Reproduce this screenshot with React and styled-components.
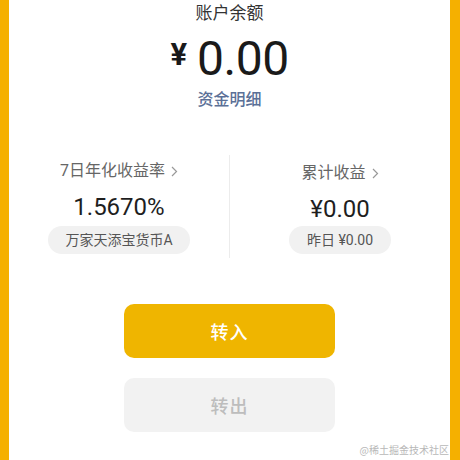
import React from "react";
import styled, { createGlobalStyle } from "styled-components";

const GlobalStyle = createGlobalStyle`
  html, body {
    margin: 0;
    padding: 0;
    background: #f5b000;
  }
  body {
    font-family: Roboto, "Noto Sans CJK SC", sans-serif;
  }
`;

const Frame = styled.div`
  width: 460px;
  height: 460px;
  box-sizing: border-box;
  padding: 0 10px 0 9px;
  background: #f5b000;
  overflow: hidden;
`;

const Panel = styled.div`
  position: relative;
  height: 100%;
  background: #fff;
  display: flex;
  flex-direction: column;
  align-items: center;
  overflow: hidden;
`;

const Title = styled.div`
  margin-top: 1px;
  font-size: 17px;
  line-height: 24px;
  color: #333;
`;

const Amount = styled.div`
  display: flex;
  align-items: center;
  height: 56px;
  margin-top: 5px;
  color: #1a1a1a;
`;

const Yen = styled.span`
  font-size: 31px;
  font-weight: 700;
  margin-right: 10px;
  margin-top: -7px;
`;

const Big = styled.span`
  font-size: 48px;
  font-weight: 400;
  letter-spacing: -0.5px;
`;

const DetailLink = styled.div`
  margin-top: 3px;
  font-size: 16px;
  line-height: 22px;
  font-weight: 500;
  color: #5b7097;
`;

const Stats = styled.div`
  align-self: stretch;
  display: grid;
  grid-template-columns: 1fr 1px 1fr;
  margin-top: 44px;
  height: 103px;
`;

const Divider = styled.div`
  background: #ececec;
`;

const Stat = styled.div`
  display: flex;
  flex-direction: column;
  align-items: center;
  padding-top: ${(p) => p.offset || 4}px;
`;

const Label = styled.div`
  display: flex;
  align-items: center;
  gap: 6px;
  font-size: 16px;
  line-height: 22px;
  color: #666;
`;

const Value = styled.div`
  margin-top: 11px;
  font-size: 24px;
  line-height: 28px;
  color: #1e1e1e;
`;

const Pill = styled.div`
  margin-top: ${(p) => p.gap || 5}px;
  height: 28px;
  padding: 0 ${(p) => p.pad || 18}px;
  border-radius: 14px;
  background: #f1f1f1;
  font-size: 14px;
  line-height: 28px;
  color: #555;
`;

const Button = styled.div`
  width: 211px;
  height: 54px;
  border-radius: 10px;
  display: flex;
  align-items: center;
  justify-content: center;
  font-size: 18px;
  font-weight: 500;
  letter-spacing: 1px;
  background: ${(p) => (p.primary ? "#efb500" : "#f2f2f2")};
  color: ${(p) => (p.primary ? "#fff" : "#bdbdbd")};
  margin-top: ${(p) => p.top}px;
`;

const Watermark = styled.div`
  position: absolute;
  right: 1px;
  bottom: 3px;
  font-family: "Noto Sans CJK SC", sans-serif;
  font-size: 10px;
  color: #b8b8b8;
  white-space: nowrap;
`;

function Chevron() {
  return (
    <svg width="7" height="11" viewBox="0 0 7 11">
      <path d="M1 1l4.5 4.5L1 10" fill="none" stroke="#999" strokeWidth="1.2" />
    </svg>
  );
}

export default function App() {
  return (
    <Frame>
      <GlobalStyle />
      <Panel>
        <Title>账户余额</Title>
        <Amount>
          <Yen>¥</Yen>
          <Big>0.00</Big>
        </Amount>
        <DetailLink>资金明细</DetailLink>
        <Stats>
          <Stat offset={5}>
            <Label>
              7日年化收益率 <Chevron />
            </Label>
            <Value>1.5670%</Value>
            <Pill pad={17}>万家天添宝货币A</Pill>
          </Stat>
          <Divider />
          <Stat offset={7}>
            <Label>
              累计收益 <Chevron />
            </Label>
            <Value>¥0.00</Value>
            <Pill gap={3}>昨日 ¥0.00</Pill>
          </Stat>
        </Stats>
        <Button primary top={46}>转入</Button>
        <Button top={20}>转出</Button>
        <Watermark>@稀土掘金技术社区</Watermark>
      </Panel>
    </Frame>
  );
}
